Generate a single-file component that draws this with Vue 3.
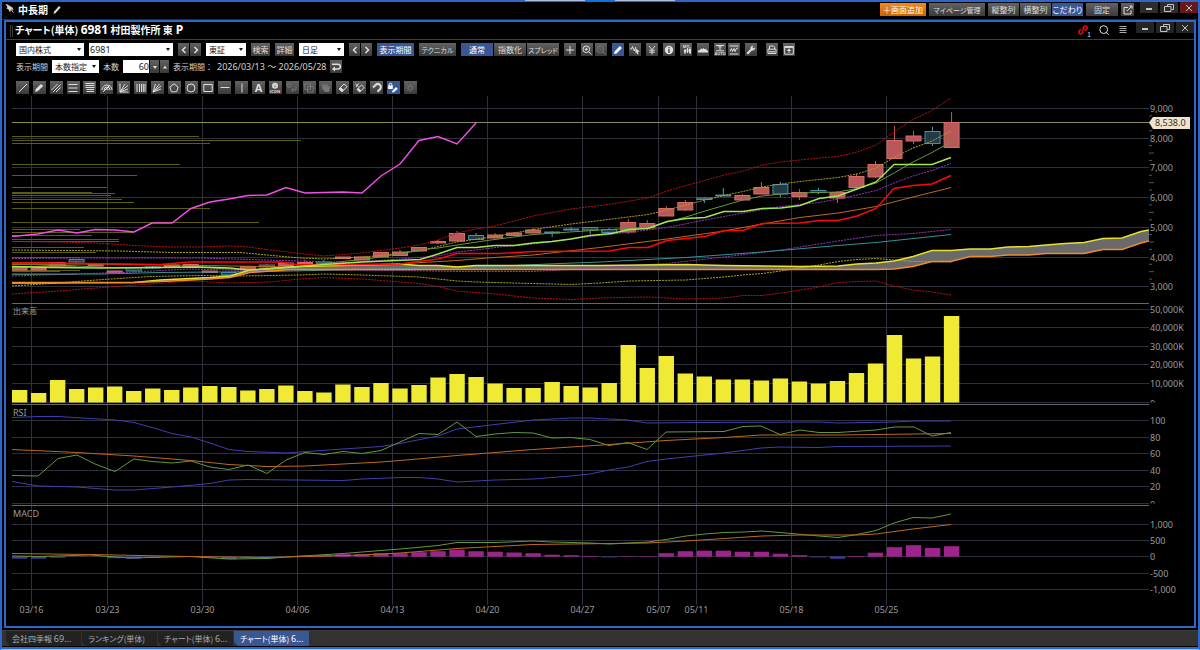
<script setup>
import { ref } from 'vue'

const lineCount = ref('60')
const code = ref('6981')

const titleButtons = [
  { t: '＋画面追加', c: 'orange w46' },
  { t: 'マイページ管理', c: 'w56 small' },
]
const alignButtons = [
  { t: '縦整列', c: '' },
  { t: '横整列', c: '' },
  { t: 'こだわり', c: 'on' },
]

/* icons on a 12 x 12 grid: s = stroked path, f = filled path, t = caption */
const mainTools = [
  { n: '十字線', s: 'M6 2V10M2 6H10' },
  { n: '拡大', s: 'M8.6 5.3A3.3 3.3 0 1 1 2 5.3A3.3 3.3 0 1 1 8.6 5.3M7.8 7.8L10.5 10.5M5.3 3.8V6.8M3.8 5.3H6.8' },
  { n: '縮小', s: 'M8.6 5.3A3.3 3.3 0 1 1 2 5.3A3.3 3.3 0 1 1 8.6 5.3M7.8 7.8L10.5 10.5M3.8 5.3H6.8', c: 'off near' },
  { n: '描画', f: 'M2 10L2.6 7.4L7.9 2.1L9.9 4.1L4.6 9.4Z', c: 'on' },
  { n: '波形', s: 'M1 5L2.5 5L3.5 2.5L5.3 7L6.8 3', f: 'M6.5 4L10.6 7.6L8.8 7.9L9.6 10L8.4 10.4L7.6 8.5L6.5 9.5Z' },
  { n: '通貨', s: 'M3 2L6 5.7L9 2M6 5.7V10.5M3.2 6.2H8.8M3.2 8.2H8.8' },
  { n: '情報', f: 'M6 1.8A4.2 4.2 0 1 0 6 10.2A4.2 4.2 0 1 0 6 1.8ZM5.3 3H6.7V4.3H5.3ZM5.3 5H6.7V9H5.3Z' },
  { n: 'マイ銘柄', s: 'M5 5V10M7.5 4V9M10 3V10', f: 'M4 6H6V8.5H4ZM6.6 5H8.5V8H6.6ZM9.1 5H11V9H9.1Z', t: 'MY', ty: 4 },
  { n: '出来高', f: 'M1 8.5V6.5L3 6L4 4.5L5.5 5L6.5 4L7.5 5.2L8.5 4.5L10 6.3L11 6.7V8.5Z' },
  { n: '自動', s: 'M2 1.5H10M6 2V6.2M4.4 3.2L6 1.8L7.6 3.2M2 6.8H10', t: 'AUTO', ty: 11 },
  { n: '指標', s: 'M1.5 2H10.5M1.5 10H10.5M2 7.5L3.5 4.5L4.5 7.5L6 4.5L7 7.5L8.5 4.5L10 4', c: 'near' },
  { n: '設定', s: 'M2.5 9.5L6.5 5.5', f: 'M1.5 9L5.4 5C5 3 6.7 1.3 8.7 1.8L7.3 3.3L8.6 4.6L10.1 3.2C10.6 5.2 8.9 6.9 6.9 6.5L3 10.4Z' },
  { n: '印刷', s: 'M3.5 5V2H7.5L8.7 3.2V5M2 5.2H10V9.5H2Z', f: 'M3 7.2H9V8.4H3Z', c: 'far' },
  { n: '出力', s: 'M1.7 2.5H10.3V10.2H1.7ZM1.7 3.4H10.3M6 5V9', f: 'M6 4.5L8.2 7H3.8Z' },
]

const drawTools = [
  { n: '直線', s: 'M2 10L10 2' },
  { n: '太線', f: 'M2 10L2.8 6.9L8 2L10.2 4.1L5 9Z' },
  { n: '平行線', s: 'M1.5 8L7.5 2M3 10L10.5 2.5M6 10L10.5 5.5' },
  { n: '三本線', s: 'M1.5 2.5H10.5M1.5 6H10.5M1.5 9.5H10.5' },
  { n: '多重線', s: 'M1.5 1.5H10.5M1.5 3.5H10.5M1.5 5.5H10.5M2.5 7.5H10M2.5 9.5H10' },
  { n: '円弧', s: 'M1 8A5 5 0 0 1 11 8M3 8A3 3 0 0 1 9 8M4.8 8A1.2 1.2 0 0 1 7.2 8M2 10L9 3' },
  { n: 'ファン', s: 'M2 1.5V10H10.5M2 10L10 7M2 10L10 3.5M2 10L7 2' },
  { n: '縦線群', s: 'M2 2V10M4.5 2V10M6.5 2V10M8.3 2V10M10 2V10' },
  { n: '放射線', s: 'M2 10L10 7M2 10L10 4M2 10L8.5 2M2 10L4.5 2' },
  { n: '五角形', s: 'M6 1.8L10.2 5L8.6 9.8H3.4L1.8 5Z' },
  { n: '円', s: 'M10 6A4 4 0 1 1 2 6A4 4 0 1 1 10 6' },
  { n: '四角形', s: 'M1.8 2.5H10.2V9.5H1.8Z' },
  { n: '水平線', s: 'M1.5 5.5H10.5' },
  { n: '垂直線', s: 'M6 1.5V10.5' },
  { n: '文字', big: 'A' },
  { n: 'アイコン', f: 'M6 .8A3 3 0 1 0 6 6.8A3 3 0 1 0 6 .8ZM4.6 2.8H5.4V3.6H4.6ZM6.6 2.8H7.4V3.6H6.6ZM4.5 4.4H7.5L6 5.6Z', t: 'ICON', ty: 11 },
  { n: '移動', s: 'M5 3.5A1.8 1.8 0 1 1 1.4 3.5A1.8 1.8 0 1 1 5 3.5M10 4V8H6M7.5 6L5.5 8L7.5 10', c: 'off' },
  { n: '複製', s: 'M1.8 2H7.5V7.5H1.8ZM4.5 4.5H10.2V10H4.5Z', c: 'off' },
  { n: 'つかむ', f: 'M2 3L4 2L5 5V2H6.3V5L7 2.5L8.3 3V5.5L9.3 4L10.3 4.8L9 10H5L2.5 7Z', c: 'off' },
  { n: '消しゴム', s: 'M2 7L7 2L10 4.8L5 9.8Z', f: 'M2 7L3.8 5.2L6.8 8L5 9.8Z' },
  { n: '全消去', s: 'M3 7.5L7.5 3L10.2 5.5L5.7 10ZM1.5 2L4.5 4.5M4.5 1.5L2 5', f: 'M3 7.5L4.5 6L7.2 8.5L5.7 10Z' },
  { n: '磁石', s: 'M2 5.5L4.6 3A3 3 0 0 1 9 7.2L6.5 9.8', w: 2 },
  { n: '描画ロック', s: 'M2.2 4V2.6A1.3 1.3 0 0 1 4.8 2.6V4', f: 'M1.2 3.6H5.8V7H1.2ZM5 10.5L5.6 8.5L9 5L10.8 6.7L7.2 10Z', c: 'on' },
  { n: '詳細設定', s: 'M8 6A2 2 0 1 1 4 6A2 2 0 1 1 8 6M6 2V3.4M6 8.6V10M2 6H3.4M8.6 6H10M3.2 3.2L4.2 4.2M7.8 7.8L8.8 8.8M8.8 3.2L7.8 4.2M4.2 7.8L3.2 8.8', c: 'off' },
]

/* chart geometry */
const step = 19.02
const cx = (i) => 19.6 + step * i
const priceY = (p) => 108.5 + (9000 - p) * 0.02967

const dates = [
  ['03/16', 1], ['03/23', 5], ['03/30', 10], ['04/06', 15], ['04/13', 20], ['04/20', 25],
  ['04/27', 30], ['05/07', 34], ['05/11', 36], ['05/18', 41], ['05/25', 46],
].map(([t, i]) => ({ t, x: Math.floor(cx(i) - 7.6) + 0.5 }))

const hLines = [
  [108.5, '9,000'], [138.5, '8,000'], [167.5, '7,000'], [197.5, '6,000'], [227.5, '5,000'], [257.5, '4,000'], [286.5, '3,000'],
  [309.5, '50,000K'], [327.5, '40,000K'], [346.5, '30,000K'], [364.5, '20,000K'], [383.5, '10,000K'],
  [420.5, '100'], [437.5, '80'], [453.5, '60'], [470.5, '40'], [486.5, '20'],
  [524.5, '1,000'], [540.5, '500'], [556.5, '0'], [573.5, '-500'], [589.5, '-1,000'],
]
const ticks = []
for (let p = 3250; p < 9000; p += 250) {
  if (p % 1000) ticks.push({ y: priceY(p), w: p % 500 ? 3 : 5 })
}

const profile = [
  [136, 199], [140, 301], [143, 210], [164, 180], [175, 137], [187, 107], [192, 92], [193, 115], [195, 111],
  [199, 122], [202, 134], [208, 210], [222, 259], [229, 80], [232, 134], [235, 92], [239, 119], [241, 119],
  [247, 84], [252, 96], [257, 80], [262, 58], [264, 60], [266, 76], [270, 80], [271, 60], [274, 77],
]

const candles = [
  [267.5, 270], [268, 270], [262.5, 266], [259.5, 262, 259, 263, 1], [264.5, 266], [271, 272.5], [267.5, 271, 267, 272, 1],
  [267, 268, 266, 269, 1], [265, 267], [264.5, 267], [271, 272.5], [272.5, 275, 272, 276, 1], [266.5, 269], [265, 267, 264, 268, 1],
  [263, 266], [262.5, 264, 259.5, 265], [262, 264, 260, 265, 1], [257, 258.5], [257, 260], [252.5, 257], [252, 255.5, 250, 256],
  [247.5, 251], [241.5, 243, 240, 244], [233.5, 241, 231, 242], [235.5, 239.5, 233, 240, 1], [235, 238, 233, 238],
  [233, 235.5, 232, 236], [230, 233, 228, 233], [232, 233, 231, 237, 1], [229, 230, 227, 231, 1], [227.5, 230, 227, 234, 1],
  [229.5, 232.5, 228, 234, 1], [222.5, 232, 219, 234], [223.5, 228, 220, 230], [208.5, 216, 206, 216], [202.5, 210, 200, 211],
  [198, 199.5, 197, 203, 1], [195, 196, 188, 196, 1], [195.5, 200, 194, 200], [187.5, 194, 182, 194], [184.5, 194, 182, 197, 1],
  [192.5, 196.5, 189, 200], [190.5, 192.5, 188, 194, 1], [192.5, 198, 191, 203], [176.5, 187.5, 174, 188], [164.5, 177, 161, 178],
  [140.5, 158.5, 126, 158], [136, 141, 131, 144], [131.5, 143.5, 127, 146, 1], [122.5, 147.5, 112, 147],
].map(([a, b, h = a, l = b, dn = 0], i) => ({ a, b, h, l, dn, x: cx(i) }))

const volume = [
  390, 393, 380, 389, 387.5, 386.5, 391, 388.5, 390, 387.5, 386, 387, 390.5, 389, 385.5, 391, 392.5, 384.5, 387, 383,
  388.5, 385, 377.5, 374, 377, 383.5, 388, 388, 382, 386, 387.5, 383, 345, 368, 356, 373.5, 376.5, 379.5, 379.5, 380.5,
  378.5, 381.5, 383.5, 381, 373, 363.5, 335, 358.5, 356.5, 316,
]
const macdBars = [
  -2, -2, -1, 0, 0, -1.5, -2, -1, 0, 0, -1, -2.5, -1, -1, 0, 1, 1.5, 2.5, 2.5, 3.5, 3.5, 4.5, 5.5, 7, 5.5, 5, 4.2, 3.5,
  2, 1.5, 0.7, -0.7, 0.5, 0.5, 3.5, 5.5, 6, 6, 5, 5, 3, 1.5, -0.7, -2, 0.7, 4, 9.5, 11.5, 8.7, 10.5,
]

const cloudTop = '12,283 134,282.5 160,280 210,277.5 230,276 250,270 297,266.5 362,265 400,264 419,265.5 438,265.5 457,267 476,265.5 600,265.5 686,264.5 724,265.5 800,266.5 838,266 857,264 876,263 894,261 913,256.5 932,250.5 951,250.5 970,249 990,249 1008,247 1029,246.5 1046,245 1065,243.5 1084,242.5 1103,238.5 1122,238 1141,231.5 1149,230'
const cloudBottom = '12,282.5 134,282.5 172,281 210,279 230,277.5 250,272.5 290,269.5 600,269.5 838,269.5 876,269.5 894,269 913,266.5 932,261.5 951,261.5 970,256.5 990,256.5 1008,255 1029,255 1046,253.5 1084,253.5 1103,249.5 1122,249.5 1141,243 1149,241'
const cloudArea = cloudTop + ' ' + cloudBottom.split(' ').reverse().join(' ')

const series = [
  ['dred dot', '12,241.5 58,242 96,243 134,245.5 172,247 200,247 229,246 248,247 267,249.5 300,253.5 324,256 343,254.5 362,253 400,248 419,245 438,240 457,233 476,229 495,226 533,216 571,209 608,204.5 648,198 667,191 686,185.5 705,180.5 724,175 743,171 762,165 781,162 800,160 819,158 838,156.5 857,152 876,145 894,132 913,119.5 932,110.5 951,98'],
  ['dred dot', '12,294 58,291 96,288 150,284 190,281 229,283 270,282 300,279 324,277.5 362,279 419,283.5 438,286.5 457,291 495,294 533,298 571,299.5 600,298 648,297 686,299 724,298 743,295.5 762,295.5 781,293 800,290 819,287 838,282.5 857,281.5 876,281 894,286 913,290 932,292 951,295'],
  ['dyel dot', '12,250 120,251 172,252.5 240,252.5 267,255 300,258 324,259 362,257 381,255.5 419,251 438,246.5 457,242 495,236.5 533,229.5 571,224 600,220.5 648,214.5 667,210 686,205 705,200 724,195.5 743,191.5 762,187 781,184 800,181.5 838,177.5 857,174 876,168 894,157.5 913,148 932,141 951,131'],
  ['dyel dot', '12,286 58,283 96,280 150,276.5 200,275.5 240,276 300,275 324,274 362,275 419,277 457,281 476,282 533,283.5 571,284.5 600,283 629,281 686,280 724,277 743,275 762,273.5 781,271 800,268 819,265 838,261.5 857,259.5 876,258.5 894,260 913,261.5 951,262'],
  ['purp dot', '12,258.5 77,258 200,258 250,259.5 300,261 350,262.5 400,259 438,256 457,252 476,250 500,247 533,244 590,236.5 648,230 667,227.5 705,220 743,213 781,206.5 819,202.5 838,199 857,195 876,190.5 894,183 913,176 932,170.5 951,163.5'],
  ['purp dot', '12,276 77,274 134,272 190,269 240,270.5 300,270 400,270.5 457,271.5 533,271.5 580,269 600,267.5 667,263.5 724,257 781,250 838,241 876,235.5 913,233.5 951,229.5'],
  ['teal', '12,274 100,274 160,272.5 270,271.5 400,268.5 490,266.5 560,263.5 600,262 686,257.5 762,252 838,245.5 876,242.5 951,234.5'],
  ['orng', '12,264 100,264 200,265.5 300,267 380,265 430,262 457,260.5 487,258 533,255 600,247.5 667,239 724,231 762,224 800,217.5 838,213 876,206.5 913,197 951,187.5'],
  ['grn', '12,268 58,265 115,268 200,267.5 250,270 300,266 362,259.5 381,257 419,250 438,248 457,245 487,240.5 533,234.5 570,232 600,230 648,227.5 667,222 686,217 705,211 724,205.5 743,200 762,196 781,194 800,193 838,192 857,188.5 876,183 894,173 913,162 932,152.5 951,142'],
  ['red', '12,263 50,263 160,264.5 190,262 280,262 300,265 400,264 419,261.5 438,259 457,253.5 500,253.5 533,251.5 610,251 629,247.5 648,247.5 667,240.5 686,238.5 705,236.5 724,230.5 743,230.5 762,223.5 800,223 819,220.5 838,220.5 857,216 876,208.5 894,188.5 913,185.5 932,184 951,175.5'],
  ['lime', '12,266.5 50,267.5 100,268 200,267 230,268 248,270 267,269 300,266.5 324,264.5 362,262 420,259.5 438,254 457,247.5 476,247.5 495,245.5 514,245.5 533,243 552,241.5 571,239 590,235.5 612,233.5 629,229.5 648,228.5 667,221.5 686,218.5 705,217.5 724,211.5 743,211.5 762,208.5 781,208 800,205.5 819,198.5 838,196 857,189 876,182 894,164.5 932,164.5 951,157.5'],
  ['pink', '12,236.5 38,234 58,230 77,233 95,229.5 115,230 134,232 152,223 172,223 191,208.5 210,202 229,199 248,195.5 267,195 286,187.5 305,193 324,192.5 343,192 362,193 381,176 400,164 419,140.5 438,136.5 457,144 476,123'],
  ['blue', '12,417.5 38,416.5 58,416.5 115,420 134,422.5 152,427.5 172,433.5 191,437 210,443 229,449.5 248,451.5 286,453 343,449 381,446.5 400,443.5 438,436 457,429 495,424.5 533,420 571,418 590,418 628,420 647,423 700,422.5 819,422 838,423 894,422 914,421 951,421'],
  ['blue', '12,481.5 38,486 77,487 115,490 134,490 172,487 210,483.5 229,480 248,479.5 343,480.5 362,479 400,477.5 419,477.5 438,479 457,482 495,480 533,479 571,476 590,474 609,470 628,467 647,461.5 666,459 724,453 761,448 780,447 819,447.5 838,446.5 951,446'],
  ['grn', '12,475.5 38,476 58,458.5 77,455 95,464 115,471.5 134,459 152,461.5 172,463 191,461 210,467 229,469.5 248,465 267,473.5 286,460 305,452.5 324,454.5 343,451.5 362,453.5 381,450.5 400,442 419,433.5 438,434.5 457,422 476,436.5 495,434 514,432.5 533,433 552,438 571,437.5 590,439.5 609,445.5 628,442.5 647,449.5 666,432 724,431.5 743,426.5 761,426 780,434.5 800,430 819,432.5 838,432.5 876,430 894,427 914,427 932,436 951,432.5'],
  ['orng', '12,449.5 77,452.5 134,456 191,460.5 229,464.5 267,466.5 305,466 343,464 381,462 400,460.5 457,455.5 533,449.5 609,444.5 666,440.5 724,437.5 761,435 838,435 876,434.5 951,433.5'],
  ['grn', '12,556 40,556.5 90,555 130,558 190,556.5 229,559 267,558.5 286,557 343,553.5 400,549 438,545.5 457,542.5 495,542.5 533,541 552,542 590,543 610,544 648,542 666,539.5 686,536 705,534 724,532.5 743,532 762,531 780,532.5 819,536 838,537.5 857,534.5 876,530.5 894,523 913,517.5 932,518 951,514'],
  ['orng', '12,553.5 90,554.5 190,556.5 267,557.5 305,556.5 362,555 400,553 457,548.5 533,544.5 610,543.5 648,543 686,541 762,536 800,535 857,535 876,534 913,529 951,524.5'],
]

const tabs = [
  ['会社四季報', '69...'], ['ランキング(単体)', ''], ['チャート(単体)', '6...'], ['チャート(単体)', '6...'],
]
</script>

<template>
  <div class="desk">
    <div class="glow"><i></i><b></b><i></i></div>
    <header class="topbar">
      <svg class="ico" viewBox="0 0 12 12"><path class="f" d="M1.5 2L3 2.2L8.5 5.5L9.5 8L7 7.4L6 10.5L4.3 7.3L2.5 6.5L3.4 5Z" /><path class="s" d="M7 7.5L9.5 10.5" /></svg>
      <h1>中長期</h1>
      <button class="bare" aria-label="名前を編集"><svg class="ico" viewBox="0 0 12 12"><path class="f" d="M2.4 9.8L3 7.8L8 2L9.6 3.4L4.4 9.2Z" /></svg></button>
      <span class="grow"></span>
      <div class="topbtns">
        <button v-for="b in titleButtons" :key="b.t" class="btn" :class="b.c">{{ b.t }}</button>
        <div class="join">
          <button v-for="b in alignButtons" :key="b.t" class="btn w31" :class="b.c">{{ b.t }}</button>
        </div>
        <button class="btn w32">固定</button>
        <button class="btn w13" aria-label="切り離し"><svg class="ico" viewBox="0 0 12 12"><path class="s" d="M6 3.5H2V10H9V6.5M5 7L9.5 2.5M7.5 2H10V4.5" /></svg></button>
      </div>
      <div class="winbtns">
        <button aria-label="最小化"><svg class="ico" viewBox="0 0 12 12"><path class="s w2" d="M3 7H9" /></svg></button>
        <button aria-label="元に戻す"><svg class="ico" viewBox="0 0 12 12"><path class="s" d="M4.5 4.5V2.5H10.5V7.5H8.5M1.5 4.5H8V9.5H1.5Z" /></svg></button>
        <button class="close" aria-label="閉じる"><svg class="ico" viewBox="0 0 12 12"><path class="s" d="M3 3L9 9M9 3L3 9" /></svg></button>
      </div>
    </header>

    <main class="window">
      <div class="titlebar">
        <span class="grip"></span>
        <h2>チャート(単体) <span class="num">6981</span> 村田製作所 東<span class="num"> P</span></h2>
        <span class="grow"></span>
        <button class="bare link" aria-label="連動"><svg class="ico" viewBox="0 0 12 12"><path class="s thick" d="M5 7L7.5 4.5M5.5 4.5L7.2 2.5A1.6 1.6 0 0 1 9.8 5L8 7M6.5 7.5L4.8 9.5A1.6 1.6 0 0 1 2.2 7L4 5" /></svg><sub>1</sub></button>
        <button class="bare" aria-label="検索"><svg class="ico" viewBox="0 0 12 12"><path class="s" d="M9.6 5.6A3.9 3.9 0 1 1 1.8 5.6A3.9 3.9 0 1 1 9.6 5.6M8 8L10.6 10.8" /></svg></button>
        <button class="bare" aria-label="メニュー"><svg class="ico dim" viewBox="0 0 12 12"><path class="s" d="M2.5 2.5H9.5M2.5 4.5H9.5M2.5 6.5H9.5M2.5 8.5H9.5" /></svg></button>
        <div class="winbtns inner">
          <button aria-label="最小化"><svg class="ico" viewBox="0 0 12 12"><path class="s w2" d="M3 7H9" /></svg></button>
          <button aria-label="元に戻す"><svg class="ico" viewBox="0 0 12 12"><path class="s" d="M4.5 4.5V2.5H10.5V7.5H8.5M1.5 4.5H8V9.5H1.5Z" /></svg></button>
          <button aria-label="閉じる"><svg class="ico" viewBox="0 0 12 12"><path class="s" d="M3 3L9 9M9 3L3 9" /></svg></button>
        </div>
      </div>

      <div class="tools">
        <div class="row">
          <span class="sel w68"><select aria-label="市場種別"><option>国内株式</option></select></span>
          <span class="sel w84"><input v-model="code" class="num" aria-label="銘柄コード" /></span>
          <div class="join"><button class="btn w11" aria-label="前の銘柄"><svg class="ico" viewBox="0 0 12 12"><path class="s thick" d="M7.5 3L4.5 6L7.5 9" /></svg></button><button class="btn w11" aria-label="次の銘柄"><svg class="ico" viewBox="0 0 12 12"><path class="s thick" d="M4.5 3L7.5 6L4.5 9" /></svg></button></div>
          <span class="sel w40"><select aria-label="取引所"><option>東証</option></select></span>
          <button class="btn w19">検索</button>
          <button class="btn w19">詳細</button>
          <span class="sel w45"><select aria-label="足種"><option>日足</option></select></span>
          <div class="join"><button class="btn w11" aria-label="前の足"><svg class="ico" viewBox="0 0 12 12"><path class="s thick" d="M7.5 3L4.5 6L7.5 9" /></svg></button><button class="btn w11" aria-label="次の足"><svg class="ico" viewBox="0 0 12 12"><path class="s thick" d="M4.5 3L7.5 6L4.5 9" /></svg></button></div>
          <button class="btn w37 on">表示期間</button>
          <button class="btn w37 small">テクニカル</button>
          <div class="join"><button class="btn w32 on">通常</button><button class="btn w32">指数化</button><button class="btn w32 small">スプレッド</button></div>
          <button v-for="t in mainTools" :key="t.n" class="btn sq" :class="t.c" :aria-label="t.n">
            <svg class="ico" viewBox="0 0 12 12">
              <path v-if="t.s" class="s" :d="t.s" />
              <path v-if="t.f" class="f" :d="t.f" fill-rule="evenodd" />
              <text v-if="t.t" x="6" :y="t.ty" class="cap">{{ t.t }}</text>
            </svg>
          </button>
        </div>

        <div class="row second">
          <label for="period">表示期間</label>
          <span class="sel w47"><select id="period"><option>本数指定</option></select></span>
          <label for="count">本数</label>
          <div class="join spin">
            <input id="count" v-model="lineCount" class="num" />
            <button class="btn w9" aria-label="減らす"><svg class="tri" viewBox="0 0 8 8"><path d="M2 3H6L4 6Z" /></svg></button><button class="btn w9" aria-label="増やす"><svg class="tri" viewBox="0 0 8 8"><path d="M2 5.5H6L4 2.5Z" /></svg></button>
          </div>
          <span class="full">表示期間：</span>
          <span class="num range">2026/03/13 ～ 2026/05/28</span>
          <button class="btn sq" aria-label="戻す"><svg class="ico" viewBox="0 0 12 12"><path class="s thick" d="M2 3.2H8A2.3 2.3 0 0 1 8 8H4" /><path class="f" d="M5 5.5V10.5L2 8Z" /></svg></button>
        </div>

        <div class="row draw">
          <button v-for="t in drawTools" :key="t.n" class="btn w13" :class="t.c" :aria-label="t.n">
            <span v-if="t.big" class="big">{{ t.big }}</span>
            <svg v-else class="ico" viewBox="0 0 12 12">
              <path v-if="t.s" class="s" :class="{ w2: t.w }" :d="t.s" />
              <path v-if="t.f" class="f" :d="t.f" fill-rule="evenodd" />
              <text v-if="t.t" x="6" :y="t.ty" class="cap">{{ t.t }}</text>
            </svg>
          </button>
        </div>
      </div>

      <svg class="chart" viewBox="12 95 1182 531" role="img" aria-label="6981 村田製作所 日足チャート">
        <defs>
          <clipPath id="plot"><rect x="12" y="95" width="1137" height="520" /></clipPath>
          <clipPath id="zero"><path d="M1149 390H1194V402.5H1149ZM1149 490H1194V503.5H1149Z" /></clipPath>
        </defs>
        <g class="grid">
          <line v-for="h in hLines" :key="h[0]" x1="12" x2="1149" :y1="h[0]" :y2="h[0]" />
          <line x1="12" x2="1149" y1="402.5" y2="402.5" />
          <line x1="12" x2="1149" y1="503.5" y2="503.5" />
          <line v-for="d in dates" :key="d.t" :x1="d.x" :x2="d.x" y1="96" y2="605" />
        </g>
        <g class="ticks"><line v-for="k in ticks" :key="k.y" x1="1149" :x2="1149 + k.w" :y1="k.y" :y2="k.y" /></g>
        <g class="panes">
          <line x1="12" x2="1149" y1="303.5" y2="303.5" />
          <line x1="12" x2="1149" y1="404.5" y2="404.5" />
          <line x1="12" x2="1149" y1="505.5" y2="505.5" />
        </g>
        <g class="profile"><rect v-for="(p, i) in profile" :key="i" x="12" :y="p[0]" :width="p[1] - 12" height="1" /></g>
        <line class="last" x1="12" x2="1149" y1="122.5" y2="122.5" />
        <line class="lastl" x1="12" x2="385" y1="122.5" y2="122.5" />

        <g clip-path="url(#plot)">
          <rect v-for="(v, i) in volume" :key="'v' + i" class="vol" :x="cx(i) - 7.7" :y="v" width="15.4" :height="402.5 - v" />
          <template v-for="(m, i) in macdBars" :key="'m' + i">
            <rect v-if="m" :class="m > 0 ? 'mp' : 'mn'" :x="cx(i) - 7.7" :y="m > 0 ? 556.7 - m : 556.7" width="15.4" :height="Math.abs(m)" />
          </template>
          <polygon class="cloud" :points="cloudArea" />
          <g v-for="(c, i) in candles" :key="'c' + i" :class="c.dn ? 'down' : 'up'">
            <line :x1="c.x" :x2="c.x" :y1="c.h" :y2="c.a" />
            <line :x1="c.x" :x2="c.x" :y1="c.b" :y2="c.l" />
            <rect :x="c.x - 7.5" :y="c.a" width="15" :height="c.b - c.a" />
          </g>
          <polyline v-for="(s, i) in series.slice(0, 9)" :key="'s' + i" class="ln" :class="s[0]" :points="s[1]" />
          <polyline class="ln ctop" :points="cloudTop" />
          <polyline class="ln cbot" :points="cloudBottom" />
          <polyline v-for="(s, i) in series.slice(9)" :key="'t' + i" class="ln" :class="s[0]" :points="s[1]" />
        </g>

        <g class="axis">
          <text v-for="h in hLines" :key="h[0]" x="1150" :y="h[0] + 3">{{ h[1] }}</text>
          <g clip-path="url(#zero)"><text x="1150" y="407">0</text><text x="1150" y="508">0</text></g>
          <text v-for="d in dates" :key="d.t" class="mid" :x="d.x" y="613">{{ d.t }}</text>
          <text class="jp" x="13" y="314">出来高</text>
          <text x="13" y="416">RSI</text>
          <text x="13" y="517">MACD</text>
        </g>
        <path class="tag" d="M1149 122.5L1153 117H1190V129H1153Z" />
        <text class="tagt" x="1155" y="126">8,538.0</text>
      </svg>
    </main>

    <nav class="tabs">
      <button v-for="(t, i) in tabs" :key="i" :class="{ cur: i === 3 }">{{ t[0] }} <span class="num">{{ t[1] }}</span></button>
    </nav>
  </div>
</template>

<style>
html,
body {
  background: #000;
}
</style>

<style scoped>
* {
  box-sizing: border-box;
}
.desk {
  position: relative;
  min-height: 100vh;
  display: flex;
  flex-direction: column;
  background: #000;
  border: 2px solid #2f66cc;
  box-shadow: inset 0 -2px #2f66cc;
  border-bottom-color: #a9c1ea;
  border-bottom-width: 1px;
  padding-bottom: 3px;
  color: #d4d4d4;
  font: 8px/12px "Noto Sans CJK JP", "Noto Sans", sans-serif;
  font-feature-settings: "palt";
}
button,
input,
select {
  font: inherit;
  font-feature-settings: inherit;
  color: inherit;
  border: 0;
  border-radius: 0;
  margin: 0;
  padding: 0;
}
.num {
  font-family: "Noto Sans", "Noto Sans CJK JP", sans-serif;
  font-size: 9px;
}
.grow {
  flex: 1;
}
.glow {
  position: absolute;
  top: -2px;
  left: 0;
  right: 0;
  height: 1px;
  display: flex;
  justify-content: center;
}
.glow i {
  width: 60px;
  background: #a9bde6;
}
.glow b {
  width: 30px;
  background: #0a78e0;
}
.topbar {
  display: flex;
  align-items: flex-start;
  height: 18px;
  padding-left: 2px;
  border-bottom: 1px solid #2c2c30;
}
.topbar h1,
.titlebar h2 {
  margin: 0;
  font-size: 10px;
  line-height: 16px;
  color: #fff;
  white-space: nowrap;
}
.topbar h1 {
  margin: 0 3px 0 2px;
}
.ico {
  display: block;
  flex: none;
  width: 12px;
  height: 12px;
  overflow: visible;
}
.dim {
  color: #aaa;
}
.s {
  fill: none;
  stroke: currentColor;
  stroke-width: 1;
}
.thick {
  stroke-width: 1.5;
}
.w2 {
  stroke-width: 2;
}
.f {
  fill: currentColor;
}
.bare {
  background: none;
  color: #e0e0e0;
  height: 16px;
  display: flex;
  align-items: center;
}
.cap {
  font: bold 4px "Noto Sans", sans-serif;
  fill: currentColor;
  text-anchor: middle;
}
.btn {
  height: 13px;
  display: flex;
  align-items: center;
  justify-content: center;
  white-space: nowrap;
  background: linear-gradient(#626262, #3a3a3a);
  color: #dedede;
}
.small {
  font-size: 7px;
}
.on {
  background: #3a5794;
  color: #fff;
}
.orange {
  background: linear-gradient(#ee8a22, #c8640a);
  color: #fff;
}
.off {
  color: #777;
}
.sq {
  width: 12px;
}
.w9 { width: 9px; }
.w11 { width: 11px; }
.w13 { width: 13px; }
.w19 { width: 19px; }
.w31 { width: 31px; }
.w32 { width: 32px; }
.w37 { width: 37px; }
.w40 { width: 40px; }
.w45 { width: 45px; }
.w46 { width: 46px; }
.w47 { width: 47px; }
.w56 { width: 56px; }
.w68 { width: 68px; }
.w84 { width: 84px; }
.join {
  display: flex;
  gap: 1px;
}
.topbtns {
  display: flex;
  gap: 3px;
  padding-top: 1px;
}
.winbtns {
  display: flex;
  gap: 2px;
  margin-left: 6px;
}
.winbtns button {
  width: 18px;
  height: 11px;
  display: flex;
  align-items: center;
  justify-content: center;
  background: #2c2c2c;
  color: #c4c4c4;
}
.winbtns .close {
  background: #641a1c;
}
.window {
  flex: 1;
  margin: 0 2px 2px;
  border: 2px solid #2f66cc;
  background: #000;
}
.titlebar {
  display: flex;
  align-items: flex-start;
  height: 18px;
  padding-left: 4px;
  border-bottom: 1px solid #3e3e3e;
}
.grip {
  width: 3px;
  height: 12px;
  margin: 3px 2px 0 0;
  border: 1px solid #383838;
  border-width: 0 1px;
}
.titlebar .num {
  font-size: 12px;
  white-space: pre;
}
.titlebar .bare {
  margin-left: 7px;
}
.titlebar .link {
  color: #e01010;
  margin-left: 0;
}
.link sub {
  font-size: 7px;
  line-height: 7px;
  align-self: flex-end;
  color: #ddd;
  margin-left: -2px;
}
.winbtns.inner {
  margin-left: 7px;
}
.inner button {
  background: #242424;
}
.tools {
  padding: 3px 0 1px 10px;
}
.row {
  display: flex;
  align-items: center;
  height: 13px;
  gap: 5px;
}
.near {
  margin-left: -3px;
}
.far {
  margin-left: 4px;
}
.sel {
  position: relative;
  height: 13px;
  background: #fff;
  color: #222;
}
.sel::after {
  content: "";
  position: absolute;
  right: 3px;
  top: 5px;
  border: 2px solid transparent;
  border-top: 3px solid #111;
  border-bottom: 0;
  pointer-events: none;
}
.sel select,
.sel input {
  display: block;
  width: 100%;
  height: 13px;
  padding: 0 0 0 3px;
  appearance: none;
  background: none;
}
.sel input {
  padding-left: 1px;
}
.second {
  margin-top: 4px;
  gap: 4px;
}
.spin input {
  width: 26px;
  height: 13px;
  background: #fff;
  color: #222;
  text-align: right;
}
.tri {
  width: 8px;
  height: 8px;
  fill: #ddd;
}
.full {
  font-feature-settings: normal;
}
.range {
  white-space: pre;
}
.draw {
  margin-top: 8px;
  width: 401px;
  gap: 0;
  justify-content: space-between;
}
.big {
  font: bold 11px/12px "Noto Sans", sans-serif;
}
.chart {
  display: block;
  width: calc(100% - 6px);
  margin-left: 6px;
}
.grid line {
  stroke: #2e313c;
}
.ticks line {
  stroke: #555;
}
.panes line {
  stroke: #66666a;
}
.profile rect {
  fill: #5e5e08;
}
.last {
  stroke: #8a8672;
}
.lastl {
  stroke: #8e8e40;
}
.vol {
  fill: #f0ea34;
}
.mp {
  fill: #9c248c;
}
.mn {
  fill: #4438b0;
}
.cloud {
  fill: #6a6a6a;
}
.up line {
  stroke: #c05c5c;
}
.up rect {
  fill: #b85858;
  stroke: #d86a6a;
}
.down line {
  stroke: #5a9cb4;
}
.down rect {
  fill: #203c48;
  stroke: #4c8ca6;
}
.ln {
  fill: none;
  stroke-width: 1;
}
.dot {
  stroke-dasharray: 2 1;
}
.dred { stroke: #b81212; }
.dyel { stroke: #aca422; }
.purp { stroke: #9436bc; }
.teal { stroke: #2f9498; }
.orng { stroke: #bc6a1e; }
.grn { stroke: #64983c; }
.red { stroke: #ff0808; stroke-width: 1.4; }
.lime { stroke: #a0e850; stroke-width: 1.4; }
.pink { stroke: #f050e8; stroke-width: 1.4; }
.blue { stroke: #403eb0; }
.ctop { stroke: #e8e030; stroke-width: 1.4; }
.cbot { stroke: #ee8c28; stroke-width: 1.4; }
.axis text {
  font: 9px "Noto Sans", sans-serif;
  fill: #9a9a9a;
}
.axis .mid {
  text-anchor: middle;
}
.axis .jp {
  font: 8px "Noto Sans CJK JP", sans-serif;
}
.tag {
  fill: #f2e2ca;
}
.tagt {
  font: 9px "Noto Sans", sans-serif;
  fill: #333;
}
.tabs {
  display: flex;
  gap: 1px;
  background: #323232;
  border-top: 1px solid #3e3e3e;
  padding-left: 4px;
}
.tabs button {
  width: 75px;
  height: 15px;
  padding-left: 6px;
  text-align: left;
  white-space: nowrap;
  background: #222;
  color: #aaa;
  clip-path: polygon(0 0, 100% 0, 100% 100%, 4px 100%, 0 11px);
}
.tabs .cur {
  background: #3a5794;
  color: #fff;
}
</style>
